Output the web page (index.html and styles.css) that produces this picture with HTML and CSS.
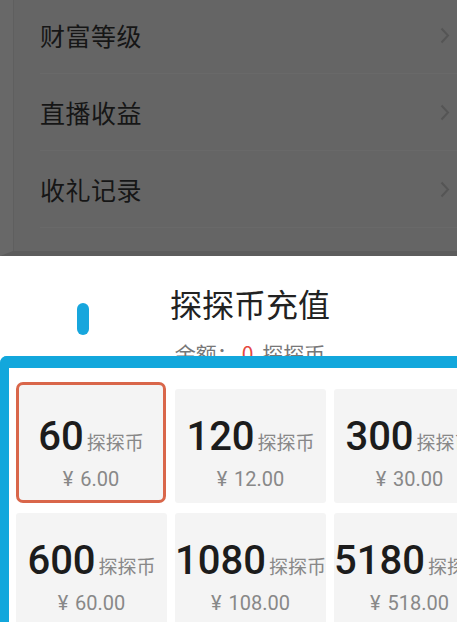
FILE: index.html
```html
<!DOCTYPE html>
<html lang="zh">
<head>
<meta charset="utf-8">
<link rel="stylesheet" href="styles.css">
</head>
<body>
<div class="screen">
  <div class="backdrop">
    <div class="menu">
      <div class="menu-row"><span class="menu-label">财富等级</span><svg class="chev" viewBox="0 0 10 17" width="10" height="17"><path d="M1.5 1.5 L8 8.5 L1.5 15.5" fill="none" stroke="#555" stroke-width="2"/></svg></div>
      <div class="menu-row"><span class="menu-label">直播收益</span><svg class="chev" viewBox="0 0 10 17" width="10" height="17"><path d="M1.5 1.5 L8 8.5 L1.5 15.5" fill="none" stroke="#555" stroke-width="2"/></svg></div>
      <div class="menu-row"><span class="menu-label">收礼记录</span><svg class="chev" viewBox="0 0 10 17" width="10" height="17"><path d="M1.5 1.5 L8 8.5 L1.5 15.5" fill="none" stroke="#555" stroke-width="2"/></svg></div>
    </div>
  </div>
  <div class="sheet">
    <div class="sheet-head">
      <div class="pill"></div>
      <div class="title-block">
        <div class="title">探探币充值</div>
        <div class="balance">余额：<span class="zero">0</span> 探探币</div>
      </div>
    </div>
    <div class="frame">
      <div class="grid">
        <div class="card selected"><div class="amount"><span class="num">60</span><span class="unit">探探币</span></div><div class="price">¥ 6.00</div></div>
        <div class="card"><div class="amount"><span class="num">120</span><span class="unit">探探币</span></div><div class="price">¥ 12.00</div></div>
        <div class="card"><div class="amount"><span class="num">300</span><span class="unit">探探币</span></div><div class="price">¥ 30.00</div></div>
        <div class="card"><div class="amount"><span class="num">600</span><span class="unit">探探币</span></div><div class="price">¥ 60.00</div></div>
        <div class="card"><div class="amount"><span class="num">1080</span><span class="unit">探探币</span></div><div class="price">¥ 108.00</div></div>
        <div class="card"><div class="amount"><span class="num">5180</span><span class="unit">探探币</span></div><div class="price">¥ 518.00</div></div>
      </div>
    </div>
  </div>
</div>
</body>
</html>
```

FILE: styles.css
```css
html, body {
  margin: 0;
  padding: 0;
}
body {
  width: 457px;
  height: 622px;
  overflow: hidden;
  background: #fff;
  font-family: Roboto, "Noto Sans CJK SC", sans-serif;
}
.screen {
  width: 457px;
  height: 622px;
  overflow: hidden;
}
.backdrop {
  height: 256px;
  box-sizing: border-box;
  background: #656565;
  border-left: 13px solid #686868;
  box-shadow: inset 1px 0 0 #5f5f5f;
  border-bottom: 5px solid #5c5c5c;
  overflow: hidden;
}
.menu {
  margin-top: -3px;
  padding-left: 27px;
}
.menu-row {
  height: 77px;
  box-sizing: border-box;
  border-bottom: 1px solid #696969;
  display: flex;
  align-items: center;
  justify-content: space-between;
  padding-right: 7px;
}
.menu-label {
  font-family: "Noto Sans CJK SC", sans-serif;
  font-size: 25px;
  color: #161616;
  letter-spacing: 0.5px;
}
.chev {
  display: block;
}
.sheet {
  height: 366px;
  background: #fff;
  overflow: hidden;
}
.sheet-head {
  height: 100px;
  overflow: hidden;
  display: flex;
  align-items: flex-start;
  padding-left: 77px;
}
.pill {
  width: 12px;
  height: 32px;
  border-radius: 6px;
  background: #17a6dd;
  margin-top: 47px;
  flex: none;
}
.title-block {
  width: 220px;
  margin-left: 51px;
  text-align: center;
  font-family: "Noto Sans CJK SC", sans-serif;
}
.title {
  margin-top: 27px;
  font-size: 32px;
  line-height: 40px;
  color: #222;
}
.balance {
  margin-top: 15px;
  font-size: 21px;
  line-height: 30px;
  color: #777;
}
.zero {
  color: #e5483f;
  margin: 0 4px;
}
.frame {
  width: 600px;
  height: 300px;
  border-left: 9px solid #12a7dc;
  border-top: 12px solid #12a7dc;
  border-top-left-radius: 7px;
  background: #fff;
  padding: 14px 0 0 7px;
}
.grid {
  display: grid;
  grid-template-columns: repeat(3, 151px);
  column-gap: 8px;
  row-gap: 10px;
  align-items: end;
}
.card {
  height: 114px;
  box-sizing: border-box;
  background: #f4f4f4;
  border-radius: 3px;
  padding-top: 26px;
  text-align: center;
  white-space: nowrap;
}
.card.selected {
  height: 121px;
  border: 3px solid #d9664a;
  border-radius: 7px;
  padding-top: 30px;
  width: 150px;
}
.amount {
  line-height: 44px;
  height: 44px;
}
.num {
  font-size: 40px;
  font-weight: 500;
  color: #1c1c1c;
}
.unit {
  font-family: "Noto Sans CJK SC", sans-serif;
  font-size: 19px;
  color: #888;
  margin-left: 3px;
}
.price {
  margin-top: 7px;
  font-size: 20px;
  line-height: 26px;
  color: #888;
  word-spacing: 2px;
}
```
